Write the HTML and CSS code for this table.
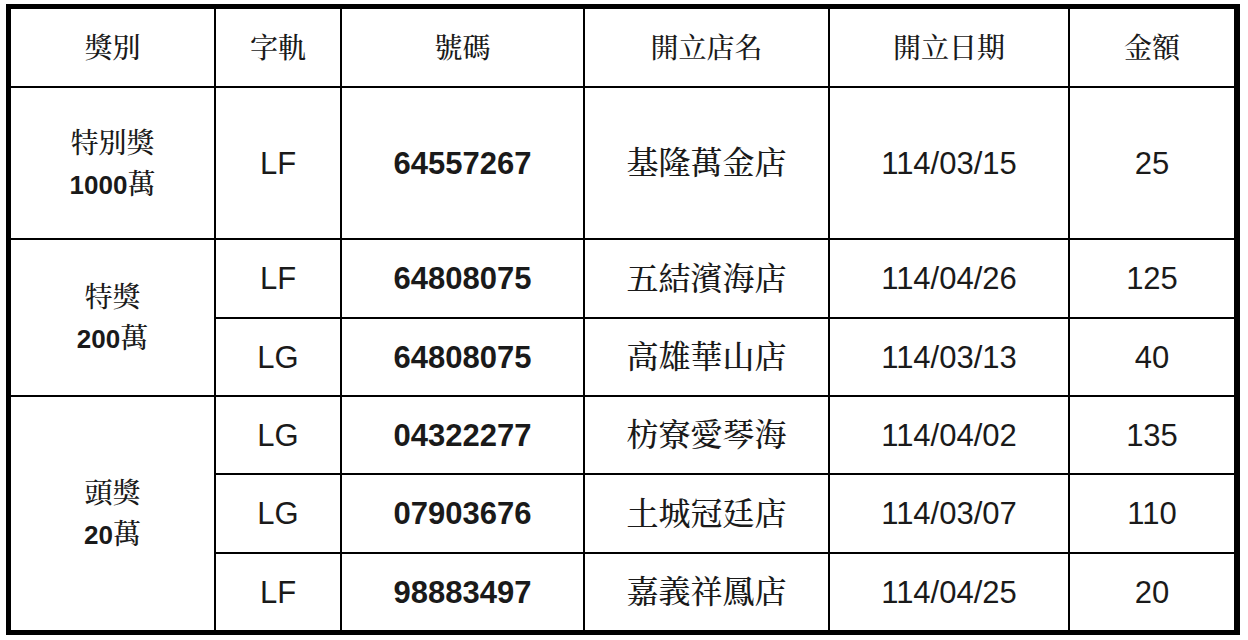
FILE: index.html
```html
<!DOCTYPE html>
<html lang="zh-Hant">
<head>
<meta charset="utf-8">
<title>中獎清單</title>
<link rel="stylesheet" href="styles.css">
</head>
<body>
<div class="wrap">
<table class="prize">
  <colgroup>
    <col class="c1"><col class="c2"><col class="c3"><col class="c4"><col class="c5"><col class="c6">
  </colgroup>
  <thead>
    <tr class="r-head">
      <th>獎別</th><th>字軌</th><th>號碼</th><th>開立店名</th><th>開立日期</th><th class="last">金額</th>
    </tr>
  </thead>
  <tbody>
    <tr class="r1">
      <td class="award"><span class="aw-name">特別獎</span><span class="aw-amt"><b>1000</b>萬</span></td>
      <td>LF</td><td class="num">64557267</td><td class="store">基隆萬金店</td><td>114/03/15</td><td class="last">25</td>
    </tr>
    <tr class="r2">
      <td class="award" rowspan="2"><span class="aw-name">特獎</span><span class="aw-amt"><b>200</b>萬</span></td>
      <td>LF</td><td class="num">64808075</td><td class="store">五結濱海店</td><td>114/04/26</td><td class="last">125</td>
    </tr>
    <tr class="r3">
      <td>LG</td><td class="num">64808075</td><td class="store">高雄華山店</td><td>114/03/13</td><td class="last">40</td>
    </tr>
    <tr class="r4">
      <td class="award bottom" rowspan="3"><span class="aw-name">頭獎</span><span class="aw-amt"><b>20</b>萬</span></td>
      <td>LG</td><td class="num">04322277</td><td class="store">枋寮愛琴海</td><td>114/04/02</td><td class="last">135</td>
    </tr>
    <tr class="r5">
      <td>LG</td><td class="num">07903676</td><td class="store">土城冠廷店</td><td>114/03/07</td><td class="last">110</td>
    </tr>
    <tr class="r6">
      <td class="bottom">LF</td><td class="num bottom">98883497</td><td class="store bottom">嘉義祥鳳店</td><td class="bottom">114/04/25</td><td class="last bottom">20</td>
    </tr>
  </tbody>
</table>
</div>
</body>
</html>
```
FILE: styles.css
```css
html, body {
  margin: 0;
  padding: 0;
  background: #ffffff;
}

.wrap {
  padding: 4px 8px 0 6px;
}

.prize {
  width: 1234px;
  table-layout: fixed;
  border-collapse: separate;
  border-spacing: 0;
  border-style: solid;
  border-color: #000;
  border-width: 5px 6px 5px 5px;
  color: #1a1a1a;
  font-family: "Liberation Sans", "Noto Serif CJK TC", "Noto Sans CJK TC", sans-serif;
}

.c1 { width: 205px; }
.c2 { width: 126px; }
.c3 { width: 243px; }
.c4 { width: 245px; }
.c5 { width: 240px; }
.c6 { width: 164px; }

.prize th,
.prize td {
  box-sizing: border-box;
  padding: 0;
  text-align: center;
  vertical-align: middle;
  border-right: 2px solid #000;
  border-bottom: 2px solid #000;
  font-size: 31px;
  font-weight: 500;
  line-height: 1;
}

.prize th {
  font-size: 28px;
  padding-top: 3px;
}

.prize .last { border-right: none; }
.prize .bottom { border-bottom: none; }

.r-head th { height: 79px; }
.r1 td { height: 152px; }
.r2 td { height: 79px; }
.r3 td { height: 78px; }
.r4 td { height: 78px; }
.r5 td { height: 79px; }
.r6 td { height: 76px; }

.prize .num {
  font-weight: bold;
  font-size: 31px;
}

.prize .store {
  font-size: 32px;
}

.prize .award {
  font-size: 28px;
  padding-top: 2px;
}

.aw-name,
.aw-amt {
  display: block;
  line-height: 41px;
}

.aw-amt b {
  font-size: 26px;
  font-weight: bold;
}
```
